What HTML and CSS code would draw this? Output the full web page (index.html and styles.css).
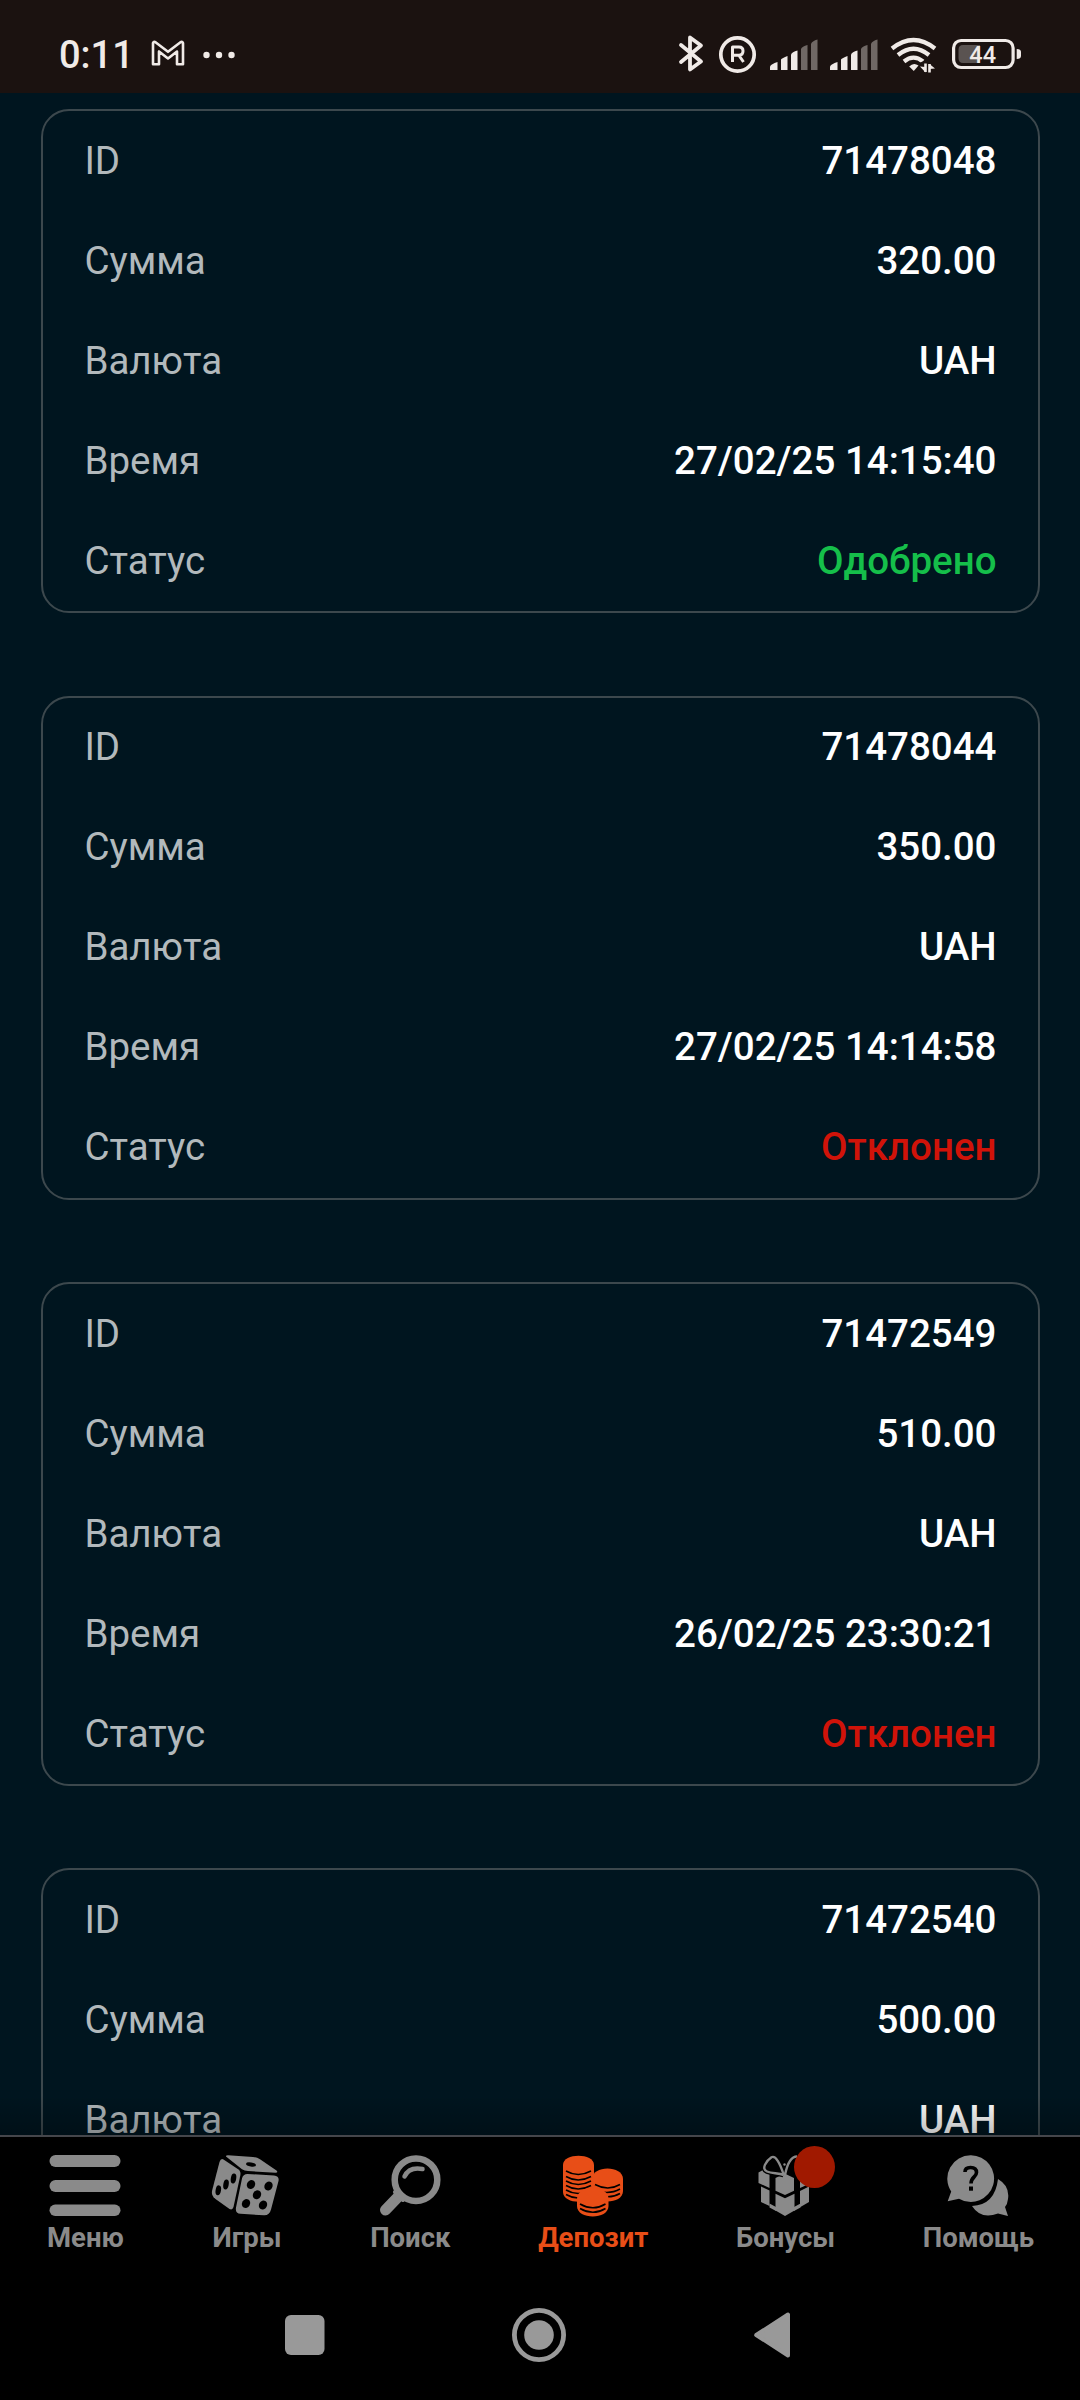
FILE: index.html
```html
<!DOCTYPE html>
<html lang="ru">
<head>
<meta charset="utf-8">
<title>История платежей</title>
<link rel="stylesheet" href="styles.css">
</head>
<body>
<div class="screen">
  <header class="status-bar">
    <div class="status-left">
      <span class="clock">0:11</span>
      <svg class="gmail" width="34" height="27" viewBox="0 0 34 27" fill="none" stroke="#f0eae7" stroke-width="2.6" stroke-linejoin="round"><path d="M2 24.3V3.2Q2.500 1.300 4.500 2.200L17 11.800L29.500 2.200Q31.500 1.300 32 3.200V24.300H26V11.500L17 18.500L8 11.500V24.300Z"/></svg>
      <svg class="dots" width="32" height="8" viewBox="0 0 32 8" fill="#f0eae7"><circle cx="3.500" cy="4" r="3.200"/><circle cx="16" cy="4" r="3.200"/><circle cx="28.500" cy="4" r="3.200"/></svg>
    </div>
    <svg class="status-icons" width="350" height="44" viewBox="0 0 350 44" fill="#f0eae7">
      <g fill="none" stroke="#f0eae7" stroke-linecap="round" stroke-linejoin="round">
        <path d="M4 14L24 30.500L13 38.500V6.500L24 14.500L4 31" stroke-width="3.800"/>
        <circle cx="60.500" cy="23.500" r="16.700" stroke-width="3.700"/>
        <path d="M55.500 31V16H62Q66 16 66 20T62 24.200H55.500M62 24.500L66.500 31" stroke-width="3" stroke-linecap="butt"/>
      </g>
      <g id="signal">
        <path d="M93 39V35.500Q94 33 100.500 31V39Z"/>
        <path d="M104 39V28.500Q105 27 110.500 25V39Z"/>
        <path d="M114 39V23.500Q115 21 120.500 19.500V39Z"/>
        <path d="M124 39V18Q125 15.500 130.500 14V39Z" opacity=".4"/>
        <path d="M134 39V13Q135 10 140.500 8.500V39Z" opacity=".4"/>
      </g>
      <use href="#signal" x="60"/>
      <g fill="none" stroke="#f0eae7" stroke-width="4.200">
        <path d="M215 17.500Q236.500 0.500 258 17.500"/>
        <path d="M221 24Q236.500 11.500 252 24"/>
        <path d="M227 30.500Q236.500 22.800 246 30.500"/>
      </g>
      <path d="M232.200 35.500Q236.500 31 241.500 34.500L236.800 40Z"/>
      <path d="M244.500 35L248.500 33V41M252 41V34L256 37" fill="none" stroke="#1b1210" stroke-width="7"/>
      <path d="M248.500 32.500V41M252.500 41.500V33" fill="none" stroke="#f0eae7" stroke-width="2.600"/>
      <path d="M243 35.500L248.500 41.500V36ZM258 37.500L252.500 33V38Z"/>
      <rect x="276.600" y="9.500" width="59.500" height="27" rx="7.500" fill="none" stroke="#f0eae7" stroke-width="3.200"/>
      <path d="M286 14H303V32H286Q281.500 32 281.500 27V19Q281.500 14 286 14Z" opacity=".3"/>
      <path d="M339.700 18Q344 18 344 21V25Q344 28 339.700 28Z"/>
      <text class="battery-level" x="305.700" y="32" text-anchor="middle">44</text>
    </svg>
  </header>

  <main class="history">
    <section class="card">
      <div class="row"><span class="label">ID</span><span class="value">71478048</span></div>
      <div class="row"><span class="label">Сумма</span><span class="value">320.00</span></div>
      <div class="row"><span class="label">Валюта</span><span class="value">UAH</span></div>
      <div class="row"><span class="label">Время</span><span class="value">27/02/25 14:15:40</span></div>
      <div class="row"><span class="label">Статус</span><span class="value approved">Одобрено</span></div>
    </section>
    <section class="card">
      <div class="row"><span class="label">ID</span><span class="value">71478044</span></div>
      <div class="row"><span class="label">Сумма</span><span class="value">350.00</span></div>
      <div class="row"><span class="label">Валюта</span><span class="value">UAH</span></div>
      <div class="row"><span class="label">Время</span><span class="value">27/02/25 14:14:58</span></div>
      <div class="row"><span class="label">Статус</span><span class="value declined">Отклонен</span></div>
    </section>
    <section class="card">
      <div class="row"><span class="label">ID</span><span class="value">71472549</span></div>
      <div class="row"><span class="label">Сумма</span><span class="value">510.00</span></div>
      <div class="row"><span class="label">Валюта</span><span class="value">UAH</span></div>
      <div class="row"><span class="label">Время</span><span class="value">26/02/25 23:30:21</span></div>
      <div class="row"><span class="label">Статус</span><span class="value declined">Отклонен</span></div>
    </section>
    <section class="card">
      <div class="row"><span class="label">ID</span><span class="value">71472540</span></div>
      <div class="row"><span class="label">Сумма</span><span class="value">500.00</span></div>
      <div class="row"><span class="label">Валюта</span><span class="value">UAH</span></div>
    </section>
    <div class="fade"></div>
  </main>

  <nav class="tabs">
    <a class="tab tab-menu">
      <svg width="72" height="62" viewBox="0 0 72 62" fill="currentColor"><rect x=".5" y="0" width="71" height="12" rx="6"/><rect x=".5" y="25" width="71" height="12" rx="6"/><rect x=".5" y="49.500" width="71" height="11.500" rx="5.700"/></svg>
      <span>Меню</span>
    </a>
    <a class="tab tab-games">
      <svg width="68" height="62" viewBox="0 0 68 62" fill="currentColor">
        <path d="M15 1.500Q14.500 .3 17 .3L42 2Q46 2.300 49 4.200L65.500 15.500Q67.500 17.800 64.500 17.800L37 16Q33.500 15.800 31 14.200Z"/>
        <path d="M12.500 4.500L27.500 14.500Q30 16.500 29.400 20L22.500 52Q21.500 55.500 18.500 54L4.500 44Q0 40.500 1 36L8.500 7Q9.800 3 12.500 4.500Z"/>
        <path d="M36.500 19L63 20.500Q68.500 21 67.500 26L60 54.500Q58.500 60.500 53 60.300L29.500 58.800Q24 58.500 25 52.500L31 23.500Q32 19 36.500 19Z"/>
        <g fill="#000">
          <ellipse cx="40" cy="9.500" rx="5" ry="2" transform="rotate(8 40 9.500)"/>
          <ellipse cx="22.500" cy="23.500" rx="2.700" ry="5" transform="rotate(10 22.500 23.500)"/>
          <ellipse cx="15" cy="29.500" rx="2.700" ry="5" transform="rotate(10 15 29.500)"/>
          <ellipse cx="7.300" cy="35.300" rx="2.700" ry="5" transform="rotate(10 7.300 35.300)"/>
          <ellipse cx="40" cy="29.500" rx="4" ry="4.700" transform="rotate(30 40 29.500)"/>
          <ellipse cx="57.500" cy="31" rx="4" ry="4.700" transform="rotate(30 57.500 31)"/>
          <ellipse cx="46" cy="39.700" rx="4" ry="4.700" transform="rotate(30 46 39.700)"/>
          <ellipse cx="35" cy="48.500" rx="4" ry="4.700" transform="rotate(30 35 48.500)"/>
          <ellipse cx="52" cy="50" rx="4" ry="4.700" transform="rotate(30 52 50)"/>
        </g>
      </svg>
      <span>Игры</span>
    </a>
    <a class="tab tab-search">
      <svg width="62" height="62" viewBox="0 0 62 62" fill="none" stroke="currentColor" stroke-linecap="round">
        <circle cx="37" cy="24.700" r="21.300" stroke-width="6.500"/>
        <path d="M25.500 21.500Q30 11.500 43.500 14" stroke-width="4.500"/>
        <path d="M18.500 42.500L6.500 55" stroke-width="11"/>
        <path d="M16 37L24 45" stroke-width="4"/>
      </svg>
      <span>Поиск</span>
    </a>
    <a class="tab tab-deposit active">
      <svg width="62" height="62" viewBox="0 0 62 62" fill="currentColor">
        <path d="M1 10C1-2.300 32-2.300 32 10V37C32 50 1 50 1 37Z"/>
        <g fill="none" stroke="#000" stroke-width="1.500"><path d="M4 16Q16 23 29 16"/><path d="M4 21.500Q16 28.500 29 21.500"/><path d="M4 26Q16 33 29 26"/><path d="M4 30.500Q16 37.500 29 30.500"/><path d="M4 35Q16 42 29 35"/><path d="M4 39.500Q9 42.500 16 43"/></g>
        <path d="M30 24C30 10 61 10 61 24V36C61 50 30 50 30 36Z"/>
        <g fill="none" stroke="#000" stroke-width="1.500"><path d="M33 29.500Q46 36.500 58 29.500"/><path d="M42 37.300Q51 38 58 34"/><path d="M45 41.800Q52 42 58 38.500"/></g>
        <path d="M15 44C15 29 46.500 29 46.500 44V51C46.500 65 15 65 15 51Z"/>
        <g fill="none" stroke="#000" stroke-width="1.500"><path d="M18 49Q31 56.500 43.500 49"/><path d="M18 53.500Q31 61 43.500 53.500"/></g>
      </svg>
      <span>Депозит</span>
    </a>
    <a class="tab tab-bonus">
      <div class="icon-box">
        <svg width="52" height="62" viewBox="0 0 52 62" fill="currentColor">
          <path d="M.5 17.500L5 15L11.500 18.500V33L.5 28Z"/>
          <path d="M17.500 23L26.500 18.500L36 23V35.800L27 40L17.500 35.800Z"/>
          <path d="M42 20L48 16L52 18V28.500L42 33Z"/>
          <path d="M3 31.500L11.500 35.500V51L3 47Z"/>
          <path d="M17.500 38.700L27 43.300L36.500 38.700V55.500L27 61L17.500 55.500Z"/>
          <path d="M42 36L51 31.500V47L42 52.200Z"/>
          <path d="M11.500 48.500L18 52V56L11.500 52.500ZM36 52L42.500 48.500V52.500L36 56Z"/>
          <g fill="none">
            <path d="M25.500 20C22 8 17.500 0 13.500 2.300C8 6 3 14 9 16.500C14 18.500 20 18 25.500 20" stroke="#000" stroke-width="5"/>
            <path d="M25.800 20C22 8 17.500 0 13.500 2.300C8 6 3 14 9 16.500C14 18.500 20 18 25.800 20M27 20C29 10 33 1.500 39 1.500" stroke="currentColor" stroke-width="2.400"/>
          </g>
          <circle cx="26.500" cy="9.500" r="1.200"/>
        </svg>
        <i class="badge"></i>
      </div>
      <span>Бонусы</span>
    </a>
    <a class="tab tab-help">
      <svg width="62" height="62" viewBox="0 0 62 62" fill="currentColor">
        <path d="M51 24Q63 31 61 44Q60.500 49 58 52L61 61L51 58.500Q34 65 25 51Q48 50 51 24Z"/>
        <path d="M24 .3A23.300 23.300 0 1 1 12 43.700L.7 46.200L4.200 36.500A23.300 23.300 0 0 1 24 .3Z"/>
        <path d="M18 17Q18 12.500 23.500 12.500Q29.500 12.500 29.500 17.500C29.500 22 24 22 24 28.500" fill="none" stroke="#000" stroke-width="3.600"/>
        <rect x="22" y="31.500" width="4" height="4.200" fill="#000"/>
      </svg>
      <span>Помощь</span>
    </a>
  </nav>

  <footer class="system-nav">
    <svg width="40" height="40" viewBox="0 0 40 40" fill="#999"><rect width="39.500" height="40" rx="6"/></svg>
    <svg width="56" height="56" viewBox="0 0 56 56" fill="none" stroke="#999"><circle cx="28" cy="28" r="24.600" stroke-width="4.800"/><circle cx="28" cy="28" r="14.800" fill="#999" stroke="none"/></svg>
    <svg width="38" height="48" viewBox="0 0 38 48" fill="#999" stroke="#999" stroke-width="4" stroke-linejoin="round"><path d="M3.200 24L35 3.500V44.500Z"/></svg>
  </footer>
</div>
</body>
</html>
```
FILE: styles.css
```css
* { box-sizing: border-box; }

body {
  margin: 0;
  background: #000;
  font-family: Roboto, "Noto Sans", sans-serif;
}

.screen {
  width: 1080px;
  height: 2400px;
  display: flex;
  flex-direction: column;
  overflow: hidden;
  background: #00151f;
}

.status-bar {
  flex: none;
  height: 93px;
  padding: 0 20px 0 59px;
  display: flex;
  justify-content: space-between;
  background: #1b1210;
}

.status-left {
  display: flex;
  align-items: center;
  height: 109px;
  color: #f0eae7;
}

.clock {
  width: 92px;
  font-size: 38px;
  font-weight: 500;
  line-height: 44px;
}

.gmail { margin-top: -2px; }

.dots { margin-left: 18px; }

.status-icons { margin: 31px 33px 0 0; }

.battery-level {
  font-size: 23.5px;
  font-weight: 500;
}

.history {
  position: relative;
  flex: none;
  height: 2042px;
  padding: 16.3px 40px 0 41px;
  display: flex;
  flex-direction: column;
  gap: 82.4px;
  overflow: hidden;
}

.card {
  flex: none;
  padding: 0 41.5px 0 41.4px;
  border: 2px solid #3c484d;
  border-radius: 28px;
}

.card:nth-child(4) {
  height: 504px;
}

.row {
  display: flex;
  justify-content: space-between;
  align-items: center;
  height: 100px;
  padding-bottom: .6px;
  font-size: 38.5px;
  line-height: 46px;
}

.label { color: #b2b9bc; }

.value {
  color: #fff;
  font-weight: 500;
}

.approved { color: #15bf4a; }

.declined { color: #d01309; }

.fade {
  position: absolute;
  left: 0;
  right: 0;
  bottom: 0;
  height: 40px;
  background: linear-gradient(transparent, rgba(0, 0, 0, .25));
}

.tabs {
  flex: none;
  height: 136px;
  padding: 18px 46px 0 47px;
  display: flex;
  justify-content: space-between;
  border-top: 2px solid #45464b;
  background: #000;
  color: #8a8a8a;
}

.tab {
  display: flex;
  flex-direction: column;
  align-items: center;
  font-size: 27.5px;
  font-weight: 700;
  line-height: 32px;
}

.tab span { margin-top: 5px; }

.tab-games svg { margin-right: 3px; }

.active { color: #e84e17; }

.icon-box {
  position: relative;
  height: 62px;
  margin-right: 3px;
}

.badge {
  position: absolute;
  left: 36px;
  top: -9px;
  width: 41px;
  height: 42px;
  border-radius: 50%;
  background: #a01900;
}

.system-nav {
  flex: none;
  height: 129px;
  padding: 0 289px 1px 285px;
  display: flex;
  align-items: center;
  justify-content: space-between;
  background: #000;
}
```
